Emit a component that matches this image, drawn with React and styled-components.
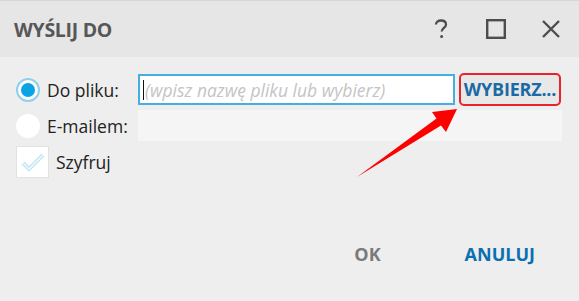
import styled, { createGlobalStyle } from "styled-components";

const GlobalStyle = createGlobalStyle`
  html, body {
    margin: 0;
    padding: 0;
    background: #eeeeee;
  }
  body {
    font-family: "Open Sans", "Noto Sans", sans-serif;
  }
`;

const Dialog = styled.div`
  position: relative;
  width: 579px;
  height: 301px;
  background: #eeeeee;
  border-top: 1px solid #d6d6d6;
  box-sizing: border-box;
  display: flex;
  flex-direction: column;
  overflow: hidden;
`;

const TitleBar = styled.div`
  height: 56px;
  background: #e6e6e6;
  display: flex;
  align-items: center;
  padding: 0 16px 0 14px;
  box-sizing: border-box;
`;

const Title = styled.h1`
  flex: 1;
  margin: 0;
  font-size: 19.5px;
  font-weight: 700;
  color: #575757;
  letter-spacing: -0.3px;
`;

const TitleButtons = styled.div`
  display: flex;
  align-items: center;
  gap: 31px;
  color: #4d4d4d;
`;

const IconButton = styled.span`
  width: 24px;
  height: 24px;
  display: flex;
  align-items: center;
  justify-content: center;
`;

const Body = styled.div`
  flex: 1;
  display: flex;
  flex-direction: column;
  padding: 16px 17px 0 16px;
`;

const Row = styled.div`
  display: flex;
  align-items: center;
  height: ${(p) => p.$h || 34}px;
`;

const Option = styled.label`
  width: 122px;
  display: flex;
  align-items: center;
  gap: 7px;
  font-size: 17.5px;
  color: #222;
`;

const Radio = styled.span`
  width: 24px;
  height: 24px;
  border-radius: 50%;
  box-sizing: border-box;
  background: #fff;
  border: 2px solid ${(p) => (p.$checked ? "#8fd0ef" : "#fff")};
  display: flex;
  align-items: center;
  justify-content: center;
  &::after {
    content: "";
    width: 14px;
    height: 14px;
    border-radius: 50%;
    background: ${(p) => (p.$checked ? "#0aa3e3" : "transparent")};
  }
`;

const Input = styled.div`
  width: 317px;
  height: 31px;
  box-sizing: border-box;
  background: #fff;
  border: 2px solid #45aee2;
  display: flex;
  align-items: center;
  padding-left: 3px;
  font-size: 17.5px;
  font-style: italic;
  color: #c4c4c4;
  white-space: nowrap;
  &::before {
    content: "";
    width: 1px;
    height: 20px;
    background: #111;
    margin-right: 1px;
  }
`;

const Field = styled.div`
  width: 424px;
  height: 31px;
  background: #f5f5f5;
`;

const PickButton = styled.button`
  margin-left: 4px;
  width: 102px;
  height: 33px;
  box-sizing: border-box;
  border: 2px solid #e8232b;
  border-radius: 5px;
  background: #e8e8e8;
  font-family: inherit;
  font-size: 18px;
  font-weight: 700;
  color: #1a6aa6;
  padding: 0 0 2px;
  letter-spacing: -0.2px;
  white-space: nowrap;
`;

const Check = styled.span`
  width: 33px;
  height: 32px;
  box-sizing: border-box;
  background: #fff;
  border: 1px solid #e2e2e2;
  display: flex;
  align-items: center;
  justify-content: center;
`;

const Footer = styled.div`
  display: flex;
  justify-content: flex-end;
  align-items: center;
  gap: 84px;
  padding: 0 27px 0 0;
  height: 56px;
  margin-top: auto;
  margin-bottom: 19px;
`;

const FooterButton = styled.button`
  border: none;
  background: none;
  font-family: inherit;
  font-size: 18px;
  font-weight: 700;
  padding: 0;
  color: ${(p) => (p.$primary ? "#0a70b2" : "#7a7a7a")};
`;

const Arrow = styled.svg`
  position: absolute;
  left: 0;
  top: 0;
  pointer-events: none;
`;

export default function App() {
  return (
    <>
      <GlobalStyle />
      <Dialog>
        <TitleBar>
          <Title>WYŚLIJ DO</Title>
          <TitleButtons>
            <IconButton>
              <svg width="14" height="20" viewBox="0 0 14 20">
                <path d="M2 5.5C2 3 4 1.5 7 1.5s5 1.6 5 4c0 3.2-4.3 3.6-4.3 7" fill="none" stroke="#4d4d4d" strokeWidth="2.3" />
                <circle cx="7.6" cy="17.4" r="1.5" fill="#4d4d4d" />
              </svg>
            </IconButton>
            <IconButton>
              <svg width="20" height="20" viewBox="0 0 20 20">
                <rect x="1.2" y="1.2" width="17.6" height="17.6" fill="none" stroke="#4d4d4d" strokeWidth="2.4" />
              </svg>
            </IconButton>
            <IconButton>
              <svg width="20" height="20" viewBox="0 0 20 20">
                <path d="M2 2L18 18M18 2L2 18" stroke="#4d4d4d" strokeWidth="2.4" />
              </svg>
            </IconButton>
          </TitleButtons>
        </TitleBar>
        <Body>
          <Row $h={33}>
            <Option>
              <Radio $checked />
              Do pliku:
            </Option>
            <Input>(wpisz nazwę pliku lub wybierz)</Input>
            <PickButton>WYBIERZ...</PickButton>
          </Row>
          <Row $h={39}>
            <Option>
              <Radio />
              E-mailem:
            </Option>
            <Field />
          </Row>
          <Row $h={34}>
            <Option>
              <Check>
                <svg width="24" height="20" viewBox="0 0 24 20">
                  <path d="M2 11l6 6L22 3" fill="none" stroke="#c2e5f5" strokeWidth="4" />
                  <path d="M2 11l6 6L22 3" fill="none" stroke="#f4fbfe" strokeWidth="1.3" />
                </svg>
              </Check>
              Szyfruj
            </Option>
          </Row>
          <Footer>
            <FooterButton>OK</FooterButton>
            <FooterButton $primary>ANULUJ</FooterButton>
          </Footer>
        </Body>
        <Arrow width="579" height="301" viewBox="0 0 579 301">
          <polygon
            points="457,108 446,131 441,124.5 357,176 436.5,117.5 432,111"
            fill="#ff0000"
          />
        </Arrow>
      </Dialog>
    </>
  );
}
